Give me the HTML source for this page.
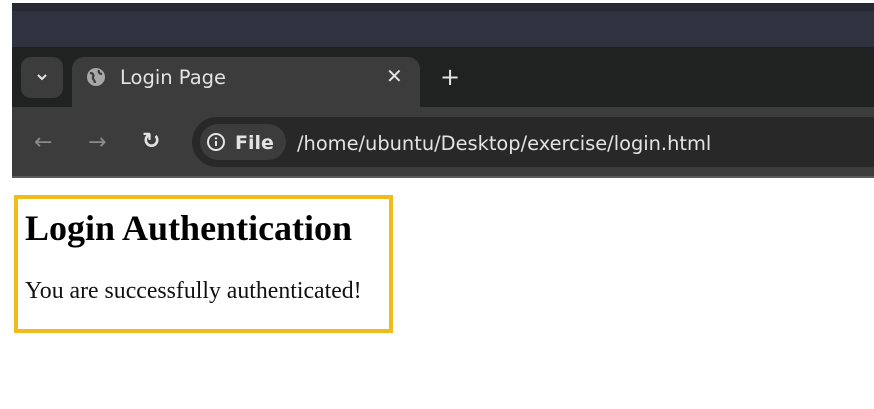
<!DOCTYPE html>
<html><head><style>
body{margin:0;width:874px;height:409px;background:#fff;position:relative;overflow:hidden;font-family:"Liberation Sans",sans-serif}
div{position:absolute;box-sizing:border-box}
.ui{font-family:"DejaVu Sans","Liberation Sans",sans-serif;color:#e3e3e3}
</style></head><body>
<div style="left:12px;top:3px;width:862px;height:8px;background:#272a35"></div>
<div style="left:12px;top:11px;width:862px;height:36px;background:#2f3340"></div>
<div style="left:12px;top:47px;width:862px;height:61px;background:#202222"></div>
<div style="left:21px;top:57px;width:42px;height:41px;background:#3c3c3c;border-radius:10px"></div>
<svg style="position:absolute;left:35px;top:72px" width="14" height="10"><path d="M3 3l4 4 4-4" stroke="#e3e3e3" stroke-width="2" fill="none"/></svg>
<div style="left:72px;top:57px;width:348px;height:51px;background:#3c3c3c;border-radius:12px 12px 0 0"></div>
<svg style="position:absolute;left:86px;top:67px" width="20" height="20"><circle cx="10" cy="10" r="9" fill="#a8a8a8"/><path d="M4 6c3 0 4 2 3 4s2 3 2 6M13 3c-1 3 1 4 3 4" stroke="#3c3c3c" stroke-width="2.2" fill="none"/></svg>
<div class="ui" style="left:120px;top:66px;font-size:19.5px">Login Page</div>
<div class="ui" style="left:386px;top:64px;font-size:20px">✕</div>
<div class="ui" style="left:440px;top:63px;font-size:24px">+</div>
<div style="left:12px;top:107px;width:862px;height:71px;background:#3c3c3c"></div>
<div style="left:12px;top:176px;width:862px;height:2px;background:#5a5a5a"></div>
<div class="ui" style="left:34px;top:130px;font-size:22px;color:#8a8a8a">←</div>
<div class="ui" style="left:88px;top:130px;font-size:22px;color:#8a8a8a">→</div>
<div class="ui" style="left:142px;top:129px;font-size:22px;font-weight:bold">↻</div>
<div style="left:192px;top:117px;width:682px;height:50px;background:#282828;border-radius:25px 0 0 25px"></div>
<div style="left:200px;top:124px;width:86px;height:36px;background:#3c3c3c;border-radius:18px"></div>
<svg style="position:absolute;left:206px;top:132px" width="20" height="20"><circle cx="10" cy="10" r="8" stroke="#e3e3e3" stroke-width="2" fill="none"/><path d="M10 9v5" stroke="#e3e3e3" stroke-width="2"/><circle cx="10" cy="6.3" r="1.2" fill="#e3e3e3"/></svg>
<div class="ui" style="left:235px;top:132px;font-size:19px;font-weight:bold">File</div>
<div class="ui" style="left:297px;top:132px;font-size:19.4px">/home/ubuntu/Desktop/exercise/login.html</div>
<div style="left:14px;top:195px;width:379px;height:138px;border:4px solid #f0bc1c"></div>
<div style="left:25px;top:207px;font-family:'Liberation Serif',serif;font-weight:bold;font-size:36px;color:#000;white-space:nowrap">Login Authentication</div>
<div style="left:25px;top:278px;font-family:'Liberation Serif',serif;font-size:23.8px;color:#111;white-space:nowrap">You are successfully authenticated!</div>
</body></html>
